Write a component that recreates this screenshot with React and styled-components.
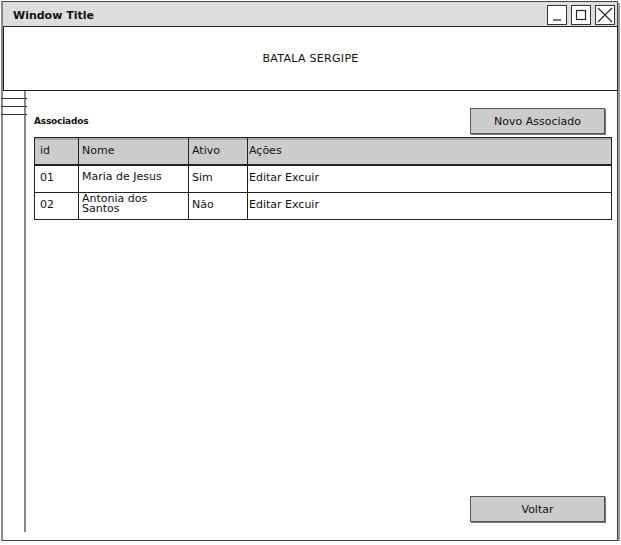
import styled, { createGlobalStyle } from "styled-components";

const Global = createGlobalStyle`
  html, body {
    margin: 0;
    padding: 0;
    background: #fff;
  }
  body {
    font-family: "DejaVu Sans", "Noto Sans", sans-serif;
    color: #111;
  }
`;

const rows = [
  { id: "01", nome: "Maria de Jesus", ativo: "Sim" },
  { id: "02", nome: "Antonia dos Santos", ativo: "Não" },
];

const App = () => {
  return (
    <>
      <Global />
      <Window>
        <TitleBar>
          <Title>Window Title</Title>
          <Controls>
            <CtrlButton>
              <svg width="14" height="14" viewBox="0 0 14 14">
                <path d="M3 12 H11" stroke="#222" strokeWidth="1.2" />
              </svg>
            </CtrlButton>
            <CtrlButton>
              <svg width="14" height="14" viewBox="0 0 14 14">
                <rect x="2.5" y="2.5" width="9" height="9" fill="none" stroke="#222" strokeWidth="1.2" />
              </svg>
            </CtrlButton>
            <CtrlButton>
              <svg width="16" height="16" viewBox="0 0 16 16">
                <path d="M1 1 L15 15 M15 1 L1 15" stroke="#222" strokeWidth="1.1" />
              </svg>
            </CtrlButton>
          </Controls>
        </TitleBar>
        <Header>BATALA SERGIPE</Header>
        <Body>
          <Rail>
            <RailLine />
            <RailLine />
            <RailLine />
          </Rail>
          <Content>
            <TopRow>
              <SectionLabel>Associados</SectionLabel>
              <Button>Novo Associado</Button>
            </TopRow>
            <Table>
              <thead>
                <tr>
                  <Th $w={44} $pad={5}>id</Th>
                  <Th $w={110}>Nome</Th>
                  <Th $w={59}>Ativo</Th>
                  <Th $pad={1}>Ações</Th>
                </tr>
              </thead>
              <tbody>
                {rows.map((r) => (
                  <tr key={r.id}>
                    <Td $pad={5}>{r.id}</Td>
                    <Td $tight>{r.nome}</Td>
                    <Td>{r.ativo}</Td>
                    <Td $pad={1}>Editar Excuir</Td>
                  </tr>
                ))}
              </tbody>
            </Table>
            <Spacer />
            <BottomRow>
              <Button>Voltar</Button>
            </BottomRow>
          </Content>
        </Body>
      </Window>
    </>
  );
};

export default App;

const Window = styled.div`
  box-sizing: border-box;
  margin: 1px 0 0 1px;
  width: 617px;
  height: 540px;
  border: 1px solid #444;
  border-left: 2px solid #888;
  box-shadow: 2px 2px 0 #999;
  display: flex;
  flex-direction: column;
  background: #fff;
`;

const TitleBar = styled.div`
  height: 24px;
  background: #ddd;
  display: flex;
  align-items: center;
  justify-content: space-between;
  padding-left: 10px;
  padding-right: 2px;
`;

const Title = styled.span`
  font-size: 11px;
  font-weight: bold;
  margin-top: 3px;
`;

const Controls = styled.div`
  display: flex;
  gap: 4px;
  align-self: flex-end;
  margin-bottom: 1px;
`;

const CtrlButton = styled.div`
  box-sizing: border-box;
  width: 20px;
  height: 20px;
  border: 1px solid #333;
  background: #fff;
  display: flex;
  align-items: center;
  justify-content: center;
`;

const Header = styled.div`
  height: 63px;
  border: 1px solid #222;
  margin-right: -1px;
  display: flex;
  align-items: center;
  justify-content: center;
  font-size: 11px;
  letter-spacing: 0.3px;
`;

const Body = styled.div`
  flex: 1;
  display: flex;
`;

const Rail = styled.div`
  width: 23px;
  margin-left: -2px;
  margin-bottom: 8px;
  border-right: 2px solid #888;
  padding-top: 7px;
  display: flex;
  flex-direction: column;
  gap: 7px;
`;

const RailLine = styled.div`
  height: 1px;
  background: #333;
  margin-right: -3px;
`;

const Content = styled.div`
  flex: 1;
  display: flex;
  flex-direction: column;
  padding: 17px 5px 18px 8px;
`;

const TopRow = styled.div`
  display: flex;
  align-items: flex-end;
  justify-content: space-between;
  padding-right: 7px;
`;

const SectionLabel = styled.span`
  font-size: 9px;
  font-weight: bold;
  letter-spacing: -0.2px;
  margin-bottom: 8px;
`;

const Button = styled.div`
  box-sizing: border-box;
  width: 135px;
  height: 26px;
  background: #ccc;
  border: 1px solid #555;
  box-shadow: 1px 1px 0 #777;
  display: flex;
  align-items: center;
  justify-content: center;
  font-size: 11px;
`;

const Table = styled.table`
  margin-top: 3px;
  width: 578px;
  border-collapse: collapse;
  border: 1px solid #222;
  font-size: 11px;
`;

const Th = styled.th`
  background: #ccc;
  height: 24px;
  font-weight: normal;
  text-align: left;
  padding: 0 2px 2px ${(p) => p.$pad ?? 3}px;
  border: 1px solid #222;
  border-bottom: 2px solid #222;
  width: ${(p) => (p.$w ? `${p.$w - 3 - (p.$pad ?? 3)}px` : "auto")};
  box-shadow: inset 0 2px 0 #aaa;
`;

const Td = styled.td`
  height: 22px;
  padding: 0 2px 4px ${(p) => p.$pad ?? 3}px;
  border: 1px solid #222;
  vertical-align: middle;
  line-height: ${(p) => (p.$tight ? "10px" : "normal")};
`;

const Spacer = styled.div`
  flex: 1;
`;

const BottomRow = styled.div`
  display: flex;
  justify-content: flex-end;
  padding-right: 7px;
`;
